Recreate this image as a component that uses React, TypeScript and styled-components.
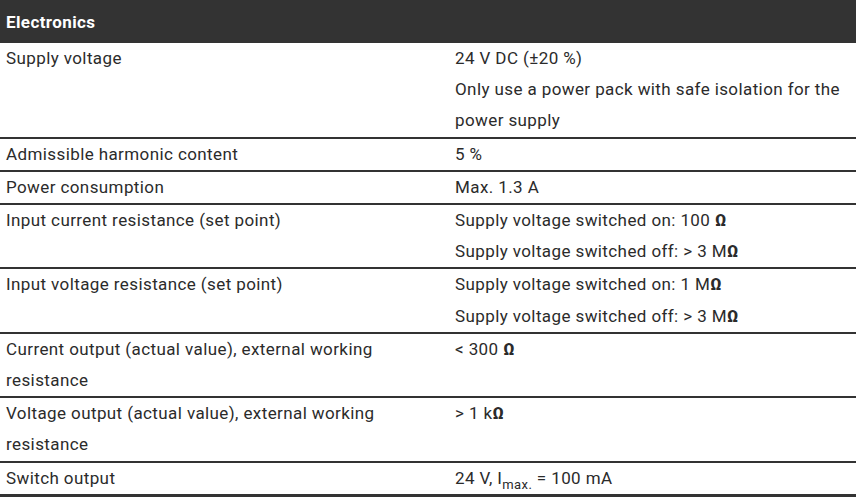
import React, { FC, ReactNode } from "react";
import styled, { createGlobalStyle } from "styled-components";

const GlobalStyle = createGlobalStyle`
  html, body {
    margin: 0;
    padding: 0;
    background: #ffffff;
  }
`;

const Table = styled.div`
  width: 856px;
  font-family: Roboto, "Liberation Sans", sans-serif;
  font-size: 17px;
  letter-spacing: 0.4px;
  color: #2b2b2b;
  border-bottom: 5px solid #333333;
`;

const Header = styled.div`
  height: 43px;
  display: flex;
  align-items: center;
  padding: 0 6px;
  background: #333333;
  color: #ffffff;
  font-weight: 700;
`;

const Row = styled.div<{ $last?: boolean }>`
  display: grid;
  grid-template-columns: 449px 1fr;
  border-bottom: ${(p) => (p.$last ? "none" : "2px solid #333333")};
`;

const Cell = styled.div`
  padding: 0 6px;
  line-height: 31.2px;
`;

const Line = styled.div``;

const Ohm = styled.b`
  font-weight: 700;
`;

const Sub = styled.sub`
  font-size: 13px;
  vertical-align: -5px;
  line-height: 0;
`;

interface SpecRow {
  label: ReactNode;
  values: ReactNode[];
}

const rows: SpecRow[] = [
  {
    label: "Supply voltage",
    values: [
      "24 V DC (±20 %)",
      "Only use a power pack with safe isolation for the power supply",
    ],
  },
  { label: "Admissible harmonic content", values: ["5 %"] },
  { label: "Power consumption", values: ["Max. 1.3 A"] },
  {
    label: "Input current resistance (set point)",
    values: [
      <>Supply voltage switched on: 100 <Ohm>Ω</Ohm></>,
      <>Supply voltage switched off: &gt; 3 M<Ohm>Ω</Ohm></>,
    ],
  },
  {
    label: "Input voltage resistance (set point)",
    values: [
      <>Supply voltage switched on: 1 M<Ohm>Ω</Ohm></>,
      <>Supply voltage switched off: &gt; 3 M<Ohm>Ω</Ohm></>,
    ],
  },
  {
    label: "Current output (actual value), external working resistance",
    values: [<>&lt; 300 <Ohm>Ω</Ohm></>],
  },
  {
    label: "Voltage output (actual value), external working resistance",
    values: [<>&gt; 1 k<Ohm>Ω</Ohm></>],
  },
  {
    label: "Switch output",
    values: [<>24 V, I<Sub>max.</Sub> = 100 mA</>],
  },
];

const App: FC = () => (
  <>
    <GlobalStyle />
    <Table>
      <Header>Electronics</Header>
      {rows.map((r, i) => (
        <Row key={i} $last={i === rows.length - 1}>
          <Cell>{r.label}</Cell>
          <Cell>
            {r.values.map((v, j) => (
              <Line key={j}>{v}</Line>
            ))}
          </Cell>
        </Row>
      ))}
    </Table>
  </>
);

export default App;
